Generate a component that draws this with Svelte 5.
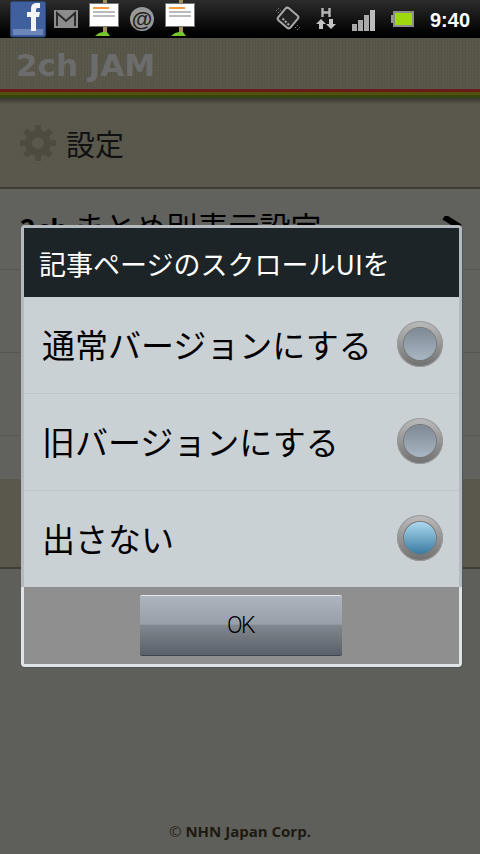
<script>
  const options = [
    { label: '通常バージョンにする', on: false },
    { label: '旧バージョンにする', on: false },
    { label: '出さない', on: true },
  ]
</script>

<main>
  <div class="statusbar">
    <div class="notify">
      <svg class="fb" width="36" height="37" viewBox="0 0 36 37">
        <rect x="0.5" y="0.5" width="35" height="35.5" rx="2" fill="#3f5f9f" stroke="#2c4474" />
        <rect x="3" y="28" width="30" height="6" fill="#6d86b8" />
        <path d="M21 30V16h-4v-5h4V8c0-4 2-6 6-6h3v5h-2c-2 0-2 1-2 2v2h4l-1 5h-3v14z" fill="#f2f4f8" />
      </svg>
      <svg class="gmail" width="24" height="18" viewBox="0 0 24 18">
        <rect width="24" height="18" fill="#8c8c8c" />
        <path d="M3 16V3l9 8 9-8v13" fill="none" stroke="#2b2b2b" stroke-width="2" />
      </svg>
      <svg class="board" width="30" height="36" viewBox="0 0 30 36">
        <rect x="14" y="0" width="4" height="33" fill="#a09256" />
        <path d="M6 36l4-3 4-1h4l3 4z" fill="#74c82c" />
        <rect x="0.5" y="3.5" width="29" height="23" fill="#fff" stroke="#777" />
        <rect x="4" y="7" width="16" height="2" fill="#f59a3c" />
        <rect x="4" y="11" width="22" height="2" fill="#bbb" />
        <rect x="4" y="15" width="22" height="2" fill="#bbb" />
      </svg>
      <span class="at">@</span>
      <svg class="board" width="30" height="36" viewBox="0 0 30 36">
        <rect x="14" y="0" width="4" height="33" fill="#a09256" />
        <path d="M6 36l4-3 4-1h4l3 4z" fill="#74c82c" />
        <rect x="0.5" y="3.5" width="29" height="23" fill="#fff" stroke="#777" />
        <rect x="4" y="7" width="16" height="2" fill="#f59a3c" />
        <rect x="4" y="11" width="22" height="2" fill="#bbb" />
        <rect x="4" y="15" width="22" height="2" fill="#bbb" />
      </svg>
    </div>
    <div class="status">
      <svg class="rotate" width="26" height="24" viewBox="0 0 26 24">
        <rect x="5" y="4" width="16" height="16" rx="2.500" transform="rotate(40 13 12)" fill="#222" stroke="#aaa" stroke-width="2" />
        <path d="M7.500 12.500l1.500 1.500M10 15l1.500 1.500M12.500 17.500l1.500 1.500" stroke="#aaa" stroke-width="2" />
        <path d="M1 5l3-3M3 7l3-3M20 22l3-3M22 24l3-3" stroke="#888" stroke-dasharray="1.500 1" />
      </svg>
      <svg class="hsdpa" width="20" height="22" viewBox="0 0 20 22">
        <path d="M6.500 0v9M13.500 0v9M6.500 4.500h7" stroke="#b5b5b5" stroke-width="2.400" fill="none" />
        <path d="M5 11l-5 5h3v5h4v-5h3zM15 21l5-5h-3v-5h-4v5h-3z" fill="#c4c4c4" />
      </svg>
      <svg class="signal" width="24" height="21" viewBox="0 0 24 21">
        <rect x="0" y="14" width="5" height="7" fill="#aaa" />
        <rect x="6" y="10" width="5" height="11" fill="#aaa" />
        <rect x="12" y="5" width="5" height="16" fill="#aaa" />
        <rect x="18" y="0" width="5" height="21" fill="#bbb" />
      </svg>
      <svg class="battery" width="23" height="16" viewBox="0 0 23 16">
        <rect x="0" y="4" width="2" height="8" fill="#999" />
        <rect x="2" y="0" width="21" height="16" fill="#8c8c8c" />
        <rect x="4" y="2" width="17" height="12" fill="#9ed80e" />
      </svg>
      <span class="clock">9:40</span>
    </div>
  </div>

  <header>
    <span class="logo">2ch JAM</span>
  </header>
  <div class="stripes"></div>

  <section class="settings-head">
    <svg width="36" height="36" viewBox="0 0 36 36">
      <circle cx="18" cy="18" r="9.500" fill="none" stroke="#9a9580" stroke-width="7" />
      <path d="M18 0v36M0 18h36M5.300 5.300l25.400 25.400M30.700 5.300L5.300 30.700" stroke="#9a9580" stroke-width="6" stroke-dasharray="6 24" />
    </svg>
    <span>設定</span>
  </section>

  <section class="list">
    <div class="row first">
      <span><b>2ch</b>まとめ別表示設定</span>
      <svg width="20" height="20" viewBox="0 0 20 20"><path d="M2 1l16 10" stroke="#000" stroke-width="6" fill="none" /></svg>
    </div>
    <div class="row"></div>
    <div class="row third">記事ページのスクロールUI</div>
    <div class="row last"></div>
  </section>

  <section class="olive"></section>

  <footer><span class="copy">©</span> NHN Japan Corp.</footer>

  <div class="scrim"></div>

  <div class="dialog">
    <div class="title">記事ページのスクロールUIを</div>
    <div class="options">
      {#each options as opt}
        <div class="option">
          <span>{opt.label}</span>
          <span class="radio"><span class="dot" class:on={opt.on}></span></span>
        </div>
      {/each}
    </div>
    <div class="actions">
      <button>OK</button>
    </div>
  </div>
</main>

<style>
  :global(body) {
    margin: 0;
    font-family: "Noto Sans CJK JP", "Liberation Sans", sans-serif;
  }

  main {
    position: relative;
    width: 480px;
    height: 854px;
    overflow: hidden;
    display: flex;
    flex-direction: column;
    background: #bdbdb4;
  }

  .statusbar {
    height: 38px;
    flex: none;
    display: flex;
    justify-content: space-between;
    background: linear-gradient(#2c2c2c, #000 90%);
  }

  .notify {
    display: flex;
    align-items: flex-start;
    padding-left: 10px;
    padding-top: 1px;
  }

  .fb { margin-right: 8px; }
  .gmail { margin: 9px 11px 0 0; }
  .board { margin-top: -1px; }

  .at {
    width: 24px;
    height: 24px;
    margin: 6px 11px 0 11px;
    border-radius: 50%;
    background: #999;
    color: #222;
    font: 700 21px/23px "Liberation Sans", sans-serif;
    text-align: center;
  }

  .status {
    display: flex;
    align-items: center;
    padding-right: 10px;
  }

  .rotate { margin-right: 15px; margin-bottom: 2px; }
  .hsdpa { margin-right: 16px; }
  .signal { margin-right: 15px; margin-top: 2px; }
  .battery { margin-right: 16px; }

  .clock {
    color: #fff;
    font: 700 20px "Liberation Sans", sans-serif;
    margin-top: 2px;
  }

  header {
    height: 51px;
    flex: none;
    background:
      repeating-linear-gradient(90deg, rgba(0, 0, 0, 0.05) 0 1px, transparent 1px 3px),
      repeating-linear-gradient(0deg, rgba(255, 255, 255, 0.05) 0 1px, transparent 1px 3px),
      #b2ad94;
    display: flex;
    align-items: center;
    padding-left: 16px;
  }

  .logo {
    font: 700 31px "DejaVu Sans", sans-serif;
    color: #d8d8d8;
    transform: translateY(1px);
  }

  .stripes {
    height: 9px;
    flex: none;
    background: linear-gradient(#d43430 0 3px, #a8a01c 3px 6px, #6a8a1c 6px 9px);
  }

  .settings-head {
    height: 91px;
    flex: none;
    display: flex;
    align-items: center;
    gap: 10px;
    padding-left: 20px;
    box-sizing: border-box;
    background:
      repeating-linear-gradient(0deg, rgba(0, 0, 0, 0.02) 0 1px, transparent 1px 3px),
      linear-gradient(#6e6c60, #b5b19a 6px);
    border-bottom: 2px solid #7d7b6c;
    font-size: 29px;
    color: #222;
  }

  .list {
    height: 290px;
    flex: none;
    display: flex;
    flex-direction: column;
    background: #c2c2bc;
  }

  .row {
    height: 83px;
    flex: none;
    box-sizing: border-box;
    border-bottom: 1px solid #adada8;
  }

  .row.first {
    height: 81px;
    display: flex;
    justify-content: space-between;
    padding: 18px 18px 0 20px;
    font-size: 31px;
    line-height: 38px;
    color: #000;
  }

  .row.first b {
    font-size: 27px;
    margin-right: 6px;
  }

  .row.first svg { margin-top: 9px; }

  .row.third {
    padding: 20px 0 0 20px;
    font-size: 27px;
    line-height: 36px;
    color: #111;
  }

  .row.last {
    height: 43px;
    border-bottom: none;
  }

  .olive {
    height: 90px;
    flex: none;
    background: #b5b19a;
    border-bottom: 2px solid #7d7b6c;
    box-sizing: border-box;
  }

  footer {
    margin-top: auto;
    padding-bottom: 13px;
    text-align: center;
    font: 700 15px "Open Sans", sans-serif;
    color: #3a361f;
  }

  .copy {
    font-weight: 400;
    color: #55523f;
  }

  .scrim {
    position: absolute;
    inset: 38px 0 0 0;
    background: rgba(0, 0, 0, 0.5);
  }

  .dialog {
    position: absolute;
    left: 21px;
    top: 225px;
    width: 441px;
    box-sizing: border-box;
    padding: 3px;
    border-radius: 4px;
    box-shadow: 1px 1px 0 #555;
    background: linear-gradient(#b4bbc0 0 82%, #dfe4e6 82%);
  }

  .title {
    height: 69px;
    box-sizing: border-box;
    padding: 1px 15px 0;
    display: flex;
    align-items: center;
    background: #1c2428;
    color: #fff;
    font-size: 27px;
  }

  .options { background: #cad1d5; }

  .option {
    height: 97px;
    box-sizing: border-box;
    padding: 0 16px 2px 18px;
    display: flex;
    justify-content: space-between;
    align-items: center;
    border-bottom: 1px solid #c0c7cb;
    font-size: 33px;
    color: #000;
  }

  .option:last-child { border-bottom: none; height: 96px; }

  .radio {
    width: 46px;
    height: 46px;
    display: flex;
    align-items: center;
    justify-content: center;
    border-radius: 50%;
    background: linear-gradient(#bcbcbc, #6f6f6f);
    box-shadow: inset 0 0 0 1px #9a9a9a;
  }

  .dot {
    width: 32px;
    height: 32px;
    border-radius: 50%;
    background: linear-gradient(#7d8994, #a9b6c3);
    box-shadow: 0 0 0 1px #777;
  }

  .dot.on {
    background: linear-gradient(#acd8ee, #3a7ba2);
  }

  .actions {
    height: 77px;
    padding-right: 2px;
    display: flex;
    justify-content: center;
    align-items: center;
    background: #8f8f8f;
  }

  button {
    width: 202px;
    height: 61px;
    border: none;
    border-top: 1px solid #e4e7ea;
    border-bottom: 1px solid #3f454c;
    border-radius: 2px;
    background: linear-gradient(#aeb4bd, #989fa8 48%, #82888f 49%, #586069);
    font: 300 23px "Roboto", sans-serif;
    letter-spacing: -1.5px;
    color: #000;
  }
</style>
